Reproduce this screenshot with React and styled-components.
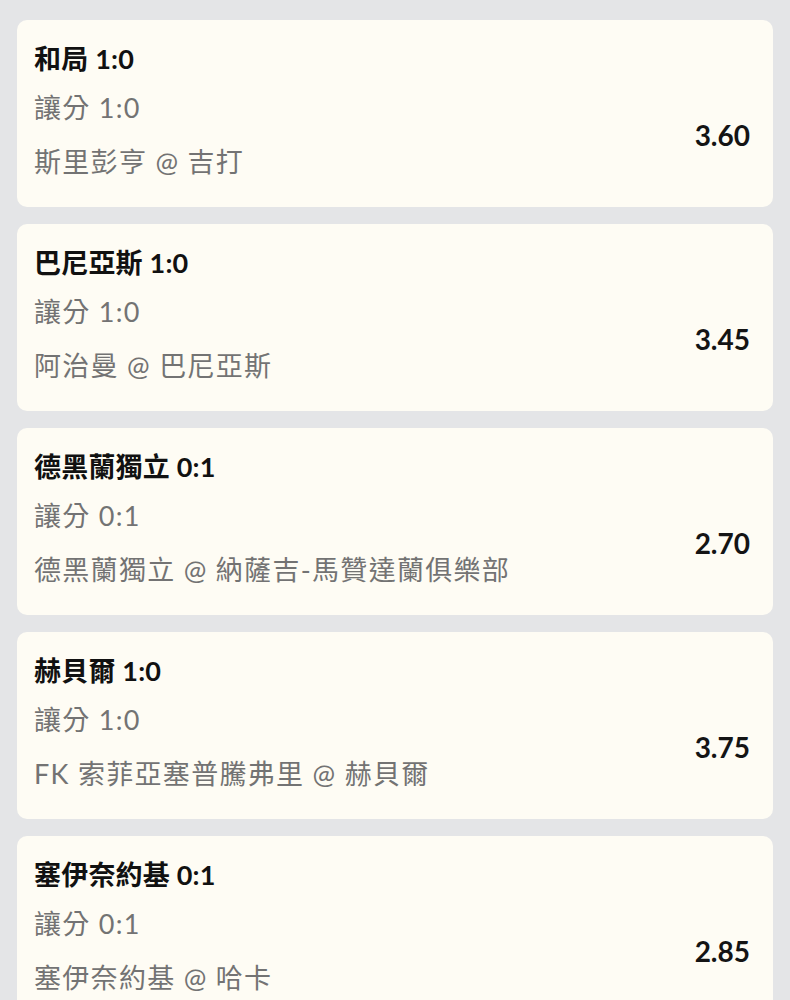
import styled, { createGlobalStyle } from 'styled-components';

const GlobalStyle = createGlobalStyle`
  html, body {
    margin: 0;
    padding: 0;
    background: #e4e5e7;
  }
  body {
    font-family: Lato, "Noto Sans CJK TC", sans-serif;
  }
`

const Page = styled.div`
  display: flex;
  flex-direction: column;
  gap: 17px;
  padding: 20px 17px;
  min-height: 1000px;
  box-sizing: border-box;
  background: #e4e5e7;
`

const Card = styled.div`
  background: #fefcf4;
  border-radius: 10px;
  padding: 20px 23px 25px 17px;
  height: 187px;
  box-sizing: border-box;
  display: flex;
  flex-direction: column;
`

const Title = styled.div`
  font-size: 27px;
  line-height: 38px;
  font-weight: 700;
  letter-spacing: 0.2px;
  color: #111111;
`

const Body = styled.div`
  display: flex;
  align-items: center;
  justify-content: space-between;
  margin-top: 10px;
`

const Info = styled.div`
  display: flex;
  flex-direction: column;
  gap: 14px;
`

const Line = styled.div`
  font-size: 27px;
  line-height: 40px;
  letter-spacing: 1.3px;
  color: #737373;
`

const Odds = styled.div`
  font-size: 28px;
  font-weight: 700;
  color: #141414;
`

const bets = [
  { title: '和局 1:0', handicap: '讓分 1:0', match: '斯里彭亨 @ 吉打', odds: '3.60' },
  { title: '巴尼亞斯 1:0', handicap: '讓分 1:0', match: '阿治曼 @ 巴尼亞斯', odds: '3.45' },
  { title: '德黑蘭獨立 0:1', handicap: '讓分 0:1', match: '德黑蘭獨立 @ 納薩吉-馬贊達蘭俱樂部', odds: '2.70' },
  { title: '赫貝爾 1:0', handicap: '讓分 1:0', match: 'FK 索菲亞塞普騰弗里 @ 赫貝爾', odds: '3.75' },
  { title: '塞伊奈約基 0:1', handicap: '讓分 0:1', match: '塞伊奈約基 @ 哈卡', odds: '2.85' },
]

const App = () => {
  return (
    <>
      <GlobalStyle />
      <Page>
        {bets.map((bet, i) => (
          <Card key={i}>
            <Title>{bet.title}</Title>
            <Body>
              <Info>
                <Line>{bet.handicap}</Line>
                <Line>{bet.match}</Line>
              </Info>
              <Odds>{bet.odds}</Odds>
            </Body>
          </Card>
        ))}
      </Page>
    </>
  )
}

export default App
